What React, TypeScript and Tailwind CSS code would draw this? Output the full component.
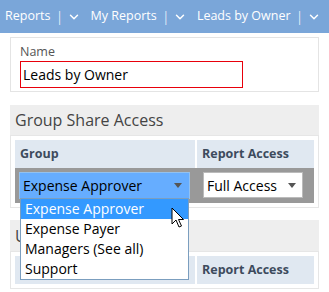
import { ChevronDown } from "lucide-react";

const font = { fontFamily: '"Open Sans", "Noto Sans", sans-serif' };

function Crumb({ label }: { label: string }) {
  return (
    <div className="flex items-center whitespace-nowrap">
      <span>{label}</span>
      <span className="ml-[5px] mr-[3px] text-[15px] font-light">|</span>
      <ChevronDown size={14} strokeWidth={2.5} className="mr-[10px]" />
    </div>
  );
}

function Caret() {
  return <div className="w-0 h-0 border-l-[4px] border-r-[4px] border-t-[5px] border-l-transparent border-r-transparent border-t-[#555]" />;
}

function Cursor() {
  return (
    <svg width="14" height="22" viewBox="0 0 14 22" className="absolute left-[171px] top-[207px]">
      <path d="M1 1 L1 17 L5 13 L8 20 L10.5 19 L7.5 12.5 L12.5 12.5 Z" fill="#fff" stroke="#000" strokeWidth="1" strokeLinejoin="round" />
    </svg>
  );
}

export default function App() {
  const groups = ["Expense Approver", "Expense Payer", "Managers (See all)", "Support"];

  return (
    <div className="relative w-[329px] h-[292px] bg-white overflow-hidden" style={font}>
      <div className="h-[33px] bg-[#7aa6d9] text-white text-[12.5px] flex items-center pl-[5px] whitespace-nowrap">
        <Crumb label="Reports" />
        <Crumb label="My Reports" />
        <Crumb label="Leads by Owner" />
      </div>

      <div className="mx-[10px] mt-[4px] h-[55px] border border-[#e4e4e4] bg-white px-[9px] pt-[6px]">
        <div className="text-[12.5px] leading-[16px] text-[#555]">Name</div>
        <div className="mt-[1px] w-[223px] h-[27px] border border-[#e8000b] flex items-center pl-[2px] text-[14px] text-black">
          Leads by Owner
        </div>
      </div>

      <div className="mx-[10px] mt-[13px] bg-[#eeeeee]">
        <div className="h-[30px] px-[5px] flex items-center text-[16px] text-[#444]">Group Share Access</div>
        <div className="bg-white border border-[#e6e6e6] p-[4px]">
          <div className="flex h-[28px] bg-[#e0e8f1] text-[12.5px] font-bold text-[#3d4b5d]">
            <div className="w-[182px] border-r-2 border-white pl-[5px] flex items-center">Group</div>
            <div className="flex-1 pl-[5px] flex items-center">Report Access</div>
          </div>
          <div className="flex h-[35px] bg-[#999999] items-start pt-[4px] pl-[4px]">
            <div className="w-[171px] h-[27px] bg-[#66adff] border border-[#92c1f0] flex items-center justify-between pl-[3px] pr-[7px] text-[14px] text-black">
              <span>Expense Approver</span>
              <Caret />
            </div>
            <div className="ml-[13px] w-[100px] h-[26px] bg-white border border-[#bbbbbb] flex items-center justify-between pl-[3px] pr-[6px] text-[14px] text-black">
              <span>Full Access</span>
              <Caret />
            </div>
          </div>
        </div>
      </div>

      <div className="mx-[10px] mt-[12px] bg-[#eeeeee]">
        <div className="h-[31px] px-[5px] flex items-center text-[16px] text-[#444]">User Share Access</div>
        <div className="bg-white border border-[#e6e6e6] p-[4px]">
          <div className="flex h-[28px] bg-[#e0e8f1] text-[12.5px] font-bold text-[#3d4b5d]">
            <div className="w-[182px] border-r-2 border-white pl-[5px] flex items-center">User</div>
            <div className="flex-1 pl-[5px] flex items-center">Report Access</div>
          </div>
        </div>
      </div>

      <div className="absolute left-[20px] top-[198px] w-[169px] bg-white border border-[#7b9ebf] text-[14px]">
        {groups.map((g, i) => (
          <div
            key={g}
            className={
              "h-[20px] leading-[20px] pl-[4px] " + (i === 0 ? "bg-[#3399ff] text-white" : "text-black")
            }
          >
            {g}
          </div>
        ))}
      </div>

      <Cursor />
    </div>
  );
}
